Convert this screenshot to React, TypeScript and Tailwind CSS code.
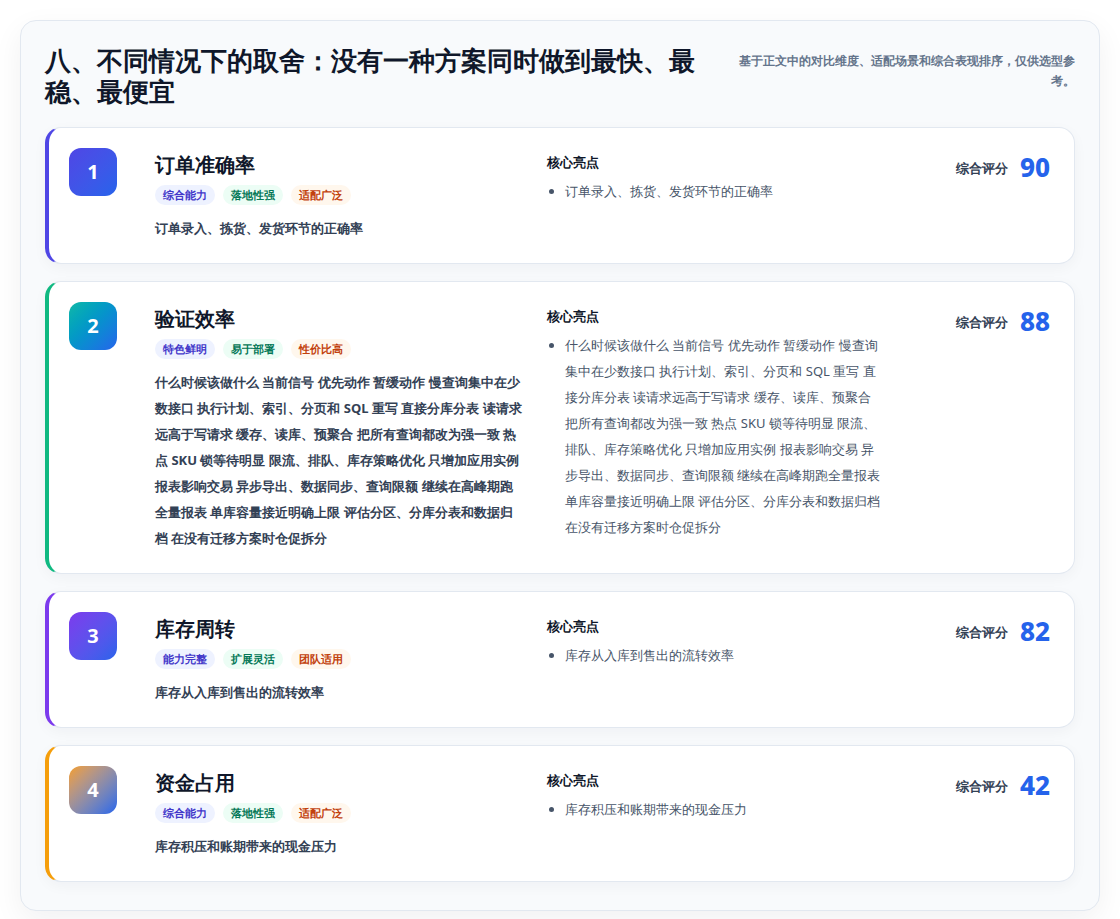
const items = [
  { n: 1, title: "订单准确率", tags: ["综合能力", "落地性强", "适配广泛"], desc: "订单录入、拣货、发货环节的正确率", score: 90, border: "border-l-[#4f46e5]", grad: "from-[#4f46e5] to-[#2563eb]" },
  { n: 2, title: "验证效率", tags: ["特色鲜明", "易于部署", "性价比高"], desc: "什么时候该做什么 当前信号 优先动作 暂缓动作 慢查询集中在少数接口 执行计划、索引、分页和 SQL 重写 直接分库分表 读请求远高于写请求 缓存、读库、预聚合 把所有查询都改为强一致 热点 SKU 锁等待明显 限流、排队、库存策略优化 只增加应用实例 报表影响交易 异步导出、数据同步、查询限额 继续在高峰期跑全量报表 单库容量接近明确上限 评估分区、分库分表和数据归档 在没有迁移方案时仓促拆分", score: 88, border: "border-l-[#10b981]", grad: "from-[#14b8a6] to-[#2563eb]" },
  { n: 3, title: "库存周转", tags: ["能力完整", "扩展灵活", "团队适用"], desc: "库存从入库到售出的流转效率", score: 82, border: "border-l-[#7c3aed]", grad: "from-[#7c3aed] to-[#2563eb]" },
  { n: 4, title: "资金占用", tags: ["综合能力", "落地性强", "适配广泛"], desc: "库存积压和账期带来的现金压力", score: 42, border: "border-l-[#f59e0b]", grad: "from-[#f59e0b] to-[#2563eb]" },
];

const tagStyles = [
  "bg-[#eef2ff] text-[#4338ca]",
  "bg-[#ecfdf5] text-[#047857]",
  "bg-[#fff7ed] text-[#c2410c]",
];

export default function App() {
  return (
    <div className="min-h-screen bg-white p-5 font-['Noto_Sans_CJK_SC','Noto_Sans',sans-serif]">
      <div className="rounded-2xl border border-[#e2e8f0] bg-[#f8fafc] px-6 pt-6 pb-7 shadow-[0_10px_30px_rgba(15,23,42,0.06)]">
        <div className="flex items-start justify-between pb-5">
          <h1 className="w-[680px] text-[26px] font-bold leading-[31px] text-[#0f172a]">八、不同情况下的取舍：没有一种方案同时做到最快、最稳、最便宜</h1>
          <p className="mt-[6px] w-[340px] text-right text-[12px] font-bold leading-[20px] text-[#64748b]">基于正文中的对比维度、适配场景和综合表现排序，仅供选型参考。</p>
        </div>
        <div className="flex flex-col gap-[17px]">
          {items.map((it) => (
            <div key={it.n} className={`flex rounded-2xl border border-[#e2e8f0] border-l-4 ${it.border} bg-white pl-5 pr-6 pt-5 pb-[22px] shadow-[0_4px_14px_rgba(15,23,42,0.04)]`}>
              <div className="w-[86px] shrink-0">
                <div className={`flex h-12 w-12 items-center justify-center rounded-xl bg-gradient-to-br ${it.grad} text-[20px] font-bold text-white`}>{it.n}</div>
              </div>
              <div className="w-[368px] shrink-0">
                <div className="text-[20px] font-bold leading-[34px] text-[#0f172a]">{it.title}</div>
                <div className="mt-[3px] flex gap-2">
                  {it.tags.map((t, i) => (
                    <span key={t} className={`rounded-full px-2 py-[3px] text-[11px] font-bold leading-[14px] ${tagStyles[i]}`}>{t}</span>
                  ))}
                </div>
                <p className="mt-[10px] text-[13px] font-bold leading-[26px] text-[#334155]">{it.desc}</p>
              </div>
              <div className="ml-6 w-[336px] shrink-0 pt-[4px]">
                <div className="text-[13px] font-bold leading-[20px] text-[#0f172a]">核心亮点</div>
                <ul className="mt-[6px] list-disc pl-[18px] text-[13px] leading-[26px] text-[#475569]">
                  <li>{it.desc}</li>
                </ul>
              </div>
              <div className="flex flex-1 items-start justify-end gap-3 pt-[1px]">
                <span className="mt-[10px] text-[13px] font-bold text-[#334155]">综合评分</span>
                <span className="text-[26px] font-extrabold leading-[36px] text-[#2563eb]">{it.score}</span>
              </div>
            </div>
          ))}
        </div>
      </div>
    </div>
  );
}
